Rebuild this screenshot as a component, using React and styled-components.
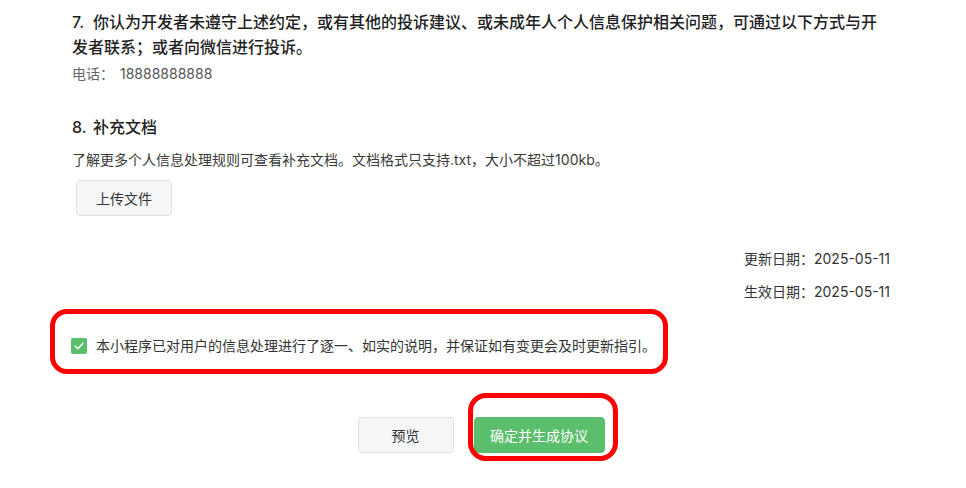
import React from "react";
import styled, { createGlobalStyle } from "styled-components";

const GlobalStyle = createGlobalStyle`
  body {
    margin: 0;
    background: #ffffff;
    font-family: "Inter", "Noto Sans CJK SC", sans-serif;
    color: #333333;
  }
`;

const Page = styled.div`
  padding: 10px 76px 40px 72px;
  display: flex;
  flex-direction: column;
`;

const SectionTitle = styled.h3`
  margin: ${(props) => props.$top || 0}px 0 0 0;
  font-size: 16px;
  line-height: 25px;
  font-weight: 500;
  color: #1f1f1f;
`;

const Num = styled.span`
  display: inline-block;
  width: 21px;
`;

const Phone = styled.p`
  margin: 4px 0 0 0;
  font-size: 14px;
  line-height: 20px;
  color: #666666;

  span {
    margin-left: 6px;
    color: #555555;
  }
`;

const Desc = styled.p`
  margin: 10px 0 0 0;
  font-size: 14px;
  line-height: 20px;
  color: #3a3a3a;
`;

const Button = styled.button`
  box-sizing: border-box;
  display: block;
  height: 36px;
  width: ${(props) => props.$width || 96}px;
  border-radius: 4px;
  font-family: inherit;
  font-size: 14px;
  cursor: pointer;
  border: 1px solid ${(props) => (props.$primary ? "#5bbe6c" : "#dfe1e5")};
  background: ${(props) => (props.$primary ? "#5bbe6c" : "#f5f6f7")};
  color: ${(props) => (props.$primary ? "#ffffff" : "#333333")};
`;

const UploadRow = styled.div`
  margin: 10px 0 0 4px;
`;

const Dates = styled.div`
  margin-top: 33px;
  display: flex;
  flex-direction: column;
  align-items: flex-end;
  gap: 13px;
  font-size: 14px;
  line-height: 20px;
  color: #333333;
`;

const Highlight = styled.div`
  box-sizing: border-box;
  margin: 7px 0 0 -22px;
  width: 618px;
  height: 65px;
  border: 5px solid #ff0000;
  border-radius: 17px;
  padding: 22px 0 0 16px;
`;

const CheckRow = styled.label`
  display: flex;
  align-items: center;
  gap: 9px;
  font-size: 14px;
  line-height: 20px;
  color: #333333;
  white-space: nowrap;
`;

const CheckBox = styled.span`
  width: 16px;
  height: 16px;
  border-radius: 2px;
  background: #5bbe6c;
  display: flex;
  align-items: center;
  justify-content: center;
  flex: none;
`;

const Actions = styled.div`
  margin: 43px -76px 0 -72px;
  display: flex;
  justify-content: center;
  gap: 20px;
  padding-right: 4px;
`;

const Marked = styled.div`
  position: relative;
  height: 36px;
`;

const Ring = styled.span`
  position: absolute;
  box-sizing: border-box;
  left: -6px;
  top: -24px;
  width: 150px;
  height: 68px;
  border: 5px solid #ff0000;
  border-radius: 18px;
  pointer-events: none;
`;

export default function App() {
  return (
    <>
      <GlobalStyle />
      <Page>
        <SectionTitle>
          <Num>7.</Num>你认为开发者未遵守上述约定，或有其他的投诉建议、或未成年人个人信息保护相关问题，可通过以下方式与开发者联系；或者向微信进行投诉。
        </SectionTitle>
        <Phone>
          电话：<span>18888888888</span>
        </Phone>

        <SectionTitle $top={31}>
          <Num>8.</Num>补充文档
        </SectionTitle>
        <Desc>了解更多个人信息处理规则可查看补充文档。文档格式只支持.txt，大小不超过100kb。</Desc>
        <UploadRow>
          <Button>上传文件</Button>
        </UploadRow>

        <Dates>
          <div>更新日期：2025-05-11</div>
          <div>生效日期：2025-05-11</div>
        </Dates>

        <Highlight>
          <CheckRow>
            <CheckBox>
              <svg width="10" height="8" viewBox="0 0 10 8" fill="none">
                <path d="M1 4l2.8 2.8L9 1.3" stroke="#ffffff" strokeWidth="1.4" strokeLinecap="round" strokeLinejoin="round" />
              </svg>
            </CheckBox>
            本小程序已对用户的信息处理进行了逐一、如实的说明，并保证如有变更会及时更新指引。
          </CheckRow>
        </Highlight>

        <Actions>
          <Button>预览</Button>
          <Marked>
            <Button $primary $width={131}>确定并生成协议</Button>
            <Ring />
          </Marked>
        </Actions>
      </Page>
    </>
  );
}
